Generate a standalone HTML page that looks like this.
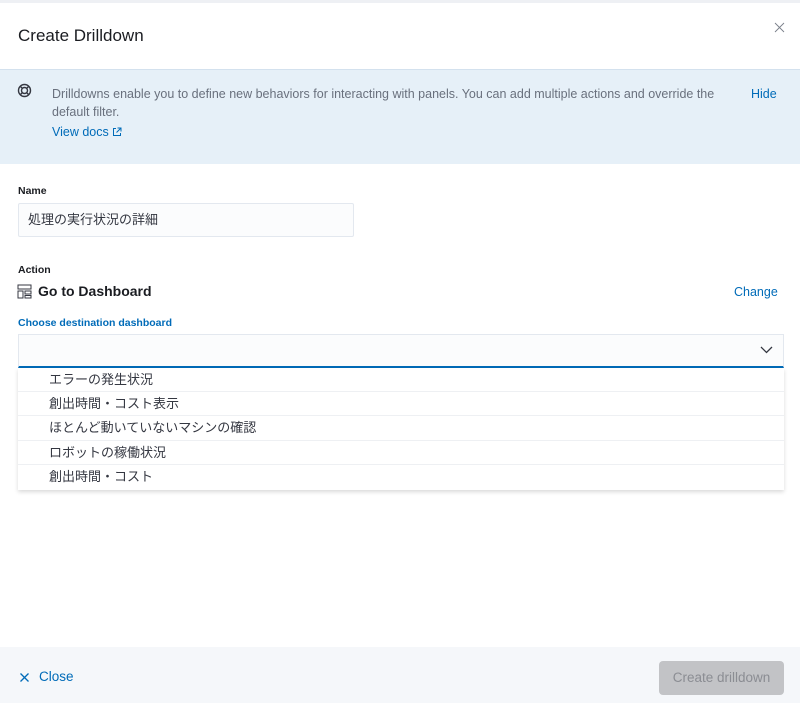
<!DOCTYPE html>
<html><head><meta charset="utf-8">
<style>
*{box-sizing:border-box;margin:0;padding:0}
body{width:800px;height:703px;background:#fff;font-family:"Liberation Sans","Noto Sans CJK JP",sans-serif;color:#343741;position:relative;overflow:hidden}
.abs{position:absolute}
</style></head><body>
<div class="abs" style="left:0;top:0;width:800px;height:3px;background:#eef0f4"></div>
<div class="abs" style="left:18px;top:26px;font-size:17px;color:#1a1c21">Create Drilldown</div>
<svg class="abs" style="left:774px;top:22px" width="11" height="11" viewBox="0 0 11 11"><path d="M1 1L10 10M10 1L1 10" stroke="#7a808a" stroke-width="0.9"/></svg>
<div class="abs" style="left:0;top:69px;width:800px;height:95px;background:#e6f0f8;border-top:1px solid #d3e1ee"></div>
<svg class="abs" style="left:17px;top:83px" width="15" height="15" viewBox="0 0 15 15"><circle cx="7.5" cy="7.5" r="6" fill="none" stroke="#343741" stroke-width="1.4"/><circle cx="7.5" cy="7.5" r="3" fill="none" stroke="#343741" stroke-width="1.4"/><path d="M3.2 3.2L5.4 5.4M11.8 3.2L9.6 5.4M3.2 11.8L5.4 9.6M11.8 11.8L9.6 9.6" stroke="#343741" stroke-width="1.4"/></svg>
<div class="abs" style="left:52px;top:85px;width:680px;font-size:12.5px;line-height:18px;color:#69707d">Drilldowns enable you to define new behaviors for interacting with panels. You can add multiple actions and override the default filter.</div>
<div class="abs" style="left:52px;top:125px;font-size:12.5px;color:#006bb8">View docs <svg width="10" height="10" viewBox="0 0 10 10" style="vertical-align:-1px"><path d="M4 1.5H1.5V8.5H8.5V6M5.5 1H9V4.5M9 1L4.5 5.5" fill="none" stroke="#006bb8" stroke-width="1"/></svg></div>
<div class="abs" style="left:751px;top:87px;font-size:12.5px;color:#006bb8">Hide</div>
<div class="abs" style="left:18px;top:185px;font-size:10.5px;font-weight:bold;color:#1a1c21">Name</div>
<div class="abs" style="left:18px;top:203px;width:336px;height:34px;background:#fbfcfd;border:1px solid #e3e8ef;border-radius:2px;font-size:13px;line-height:32px;padding-left:9px;color:#343741">処理の実行状況の詳細</div>
<div class="abs" style="left:18px;top:264px;font-size:10.5px;font-weight:bold;color:#1a1c21">Action</div>
<svg class="abs" style="left:17px;top:284px" width="15" height="15" viewBox="0 0 15 15"><rect x="1" y="1" width="13" height="4" fill="none" stroke="#343741"/><rect x="1" y="7" width="5" height="7" fill="none" stroke="#343741"/><rect x="8" y="7" width="6" height="3" fill="none" stroke="#343741"/><rect x="8" y="11.5" width="6" height="2.5" fill="none" stroke="#343741"/></svg>
<div class="abs" style="left:38px;top:283px;font-size:14px;font-weight:bold;color:#1a1c21">Go to Dashboard</div>
<div class="abs" style="left:734px;top:285px;font-size:12.5px;color:#006bb8">Change</div>
<div class="abs" style="left:18px;top:317px;font-size:10.5px;font-weight:bold;color:#006bb8">Choose destination dashboard</div>
<div class="abs" style="left:18px;top:334px;width:766px;height:34px;background:#fbfcfd;border:1px solid #e3e8ef;border-bottom:2px solid #006bb8"></div>
<svg class="abs" style="left:760px;top:346px" width="13" height="8" viewBox="0 0 13 8"><path d="M1 1L6.5 6.5L12 1" fill="none" stroke="#343741" stroke-width="1.3"/></svg>
<div class="abs" style="left:18px;top:368px;width:766px;height:122px;background:#fff;box-shadow:0 2px 4px rgba(0,0,0,.15);font-size:13px;color:#343741">
<div style="height:24px;line-height:23px;padding-left:31px;border-bottom:1px solid #eef0f3">エラーの発生状況</div>
<div style="height:24px;line-height:23px;padding-left:31px;border-bottom:1px solid #eef0f3">創出時間・コスト表示</div>
<div style="height:25px;line-height:24px;padding-left:31px;border-bottom:1px solid #eef0f3">ほとんど動いていないマシンの確認</div>
<div style="height:24px;line-height:23px;padding-left:31px;border-bottom:1px solid #eef0f3">ロボットの稼働状況</div>
<div style="height:25px;line-height:24px;padding-left:31px">創出時間・コスト</div>
</div>
<div class="abs" style="left:0;top:647px;width:800px;height:56px;background:#f5f7fa"></div>
<svg class="abs" style="left:19px;top:672px" width="11" height="11" viewBox="0 0 11 11"><path d="M1.5 1.5L9.5 9.5M9.5 1.5L1.5 9.5" stroke="#006bb8" stroke-width="1.3"/></svg>
<div class="abs" style="left:39px;top:669px;font-size:13.5px;color:#006bb8">Close</div>
<div class="abs" style="left:659px;top:661px;width:125px;height:34px;background:#c2c3c6;border-radius:4px;font-size:13.5px;line-height:34px;text-align:center;color:#8b8d93">Create drilldown</div>
</body></html>
